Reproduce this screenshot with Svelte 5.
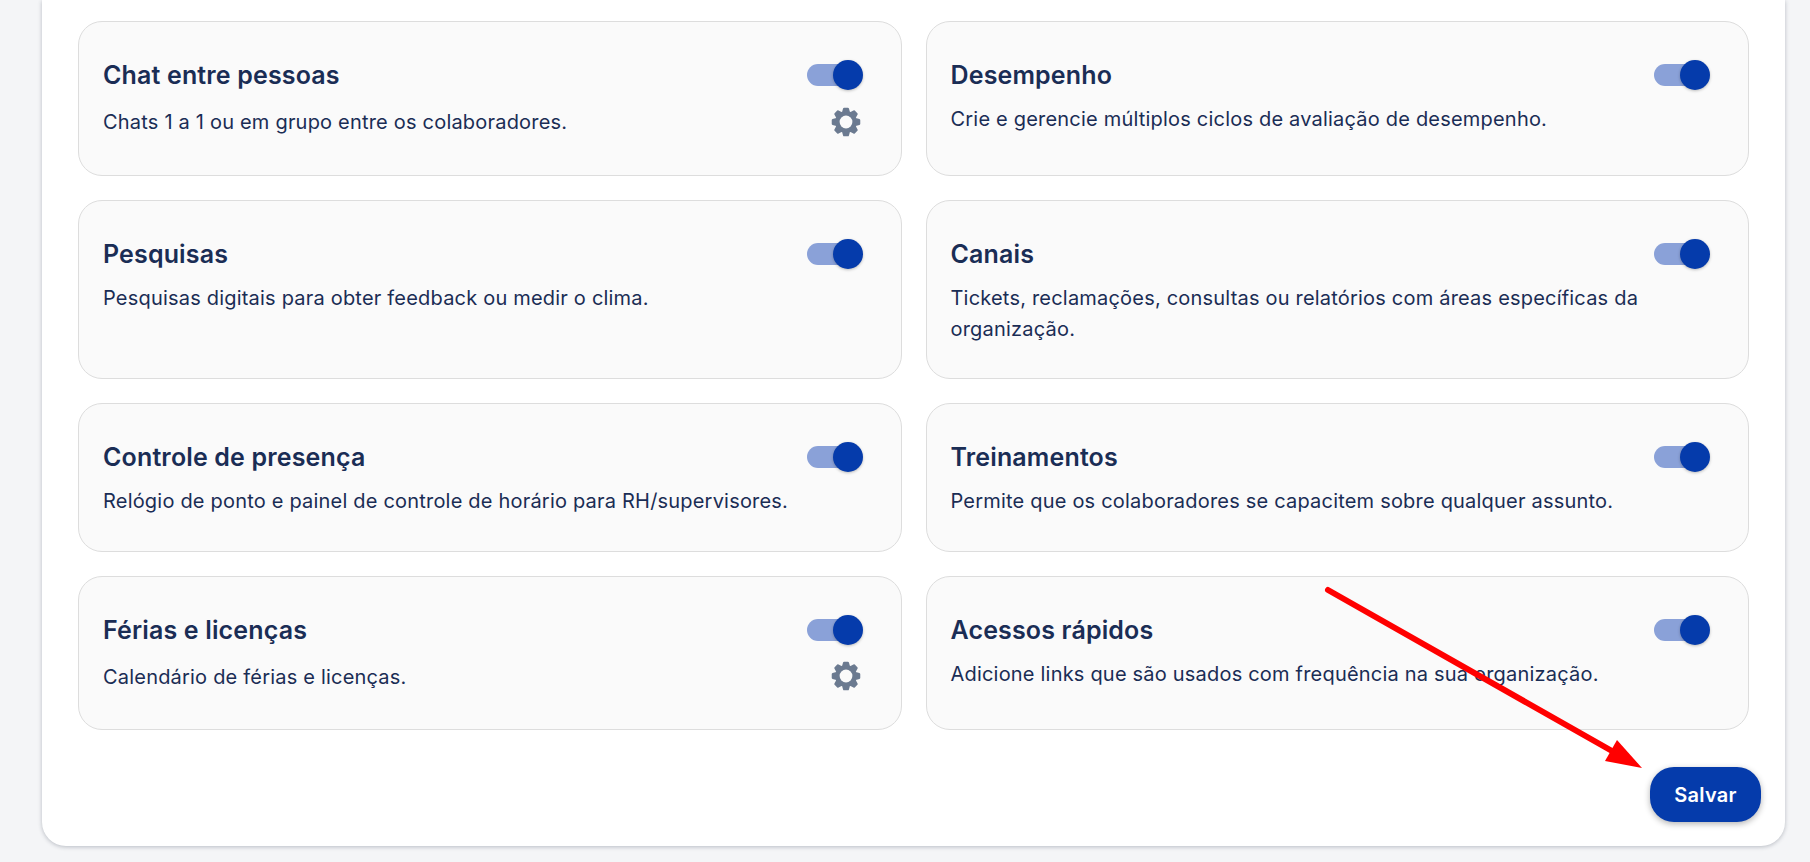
<script>
  const modules = [
    { title: 'Chat entre pessoas', text: 'Chats 1 a 1 ou em grupo entre os colaboradores.', gear: true },
    { title: 'Desempenho', text: 'Crie e gerencie múltiplos ciclos de avaliação de desempenho.' },
    { title: 'Pesquisas', text: 'Pesquisas digitais para obter feedback ou medir o clima.' },
    { title: 'Canais', text: 'Tickets, reclamações, consultas ou relatórios com áreas específicas da organização.' },
    { title: 'Controle de presença', text: 'Relógio de ponto e painel de controle de horário para RH/supervisores.' },
    { title: 'Treinamentos', text: 'Permite que os colaboradores se capacitem sobre qualquer assunto.' },
    { title: 'Férias e licenças', text: 'Calendário de férias e licenças.', gear: true },
    { title: 'Acessos rápidos', text: 'Adicione links que são usados com frequência na sua organização.' }
  ];

  // 8 teeth gear outline
  const teeth = [];
  for (let i = 0; i < 8; i++) {
    const a = (i * Math.PI) / 4 - Math.PI / 2;
    for (const [r, d] of [[8.6, -0.3], [11.6, -0.14], [11.6, 0.14], [8.6, 0.3]]) {
      teeth.push(`${(14 + r * Math.cos(a + d)).toFixed(2)} ${(14 + r * Math.sin(a + d)).toFixed(2)}`);
    }
  }
  const gearPath = 'M' + teeth.join('L') + 'Z';
</script>

<div class="page">
  <div class="panel">
    <div class="grid">
      {#each modules as mod}
        <div class="card">
          <div class="head">
            <span class="title">{mod.title}</span>
            <span class="switch"><span class="knob"></span></span>
          </div>
          <div class="body">
            <span class="text">{mod.text}</span>
            {#if mod.gear}
              <svg class="gear" viewBox="0 0 28 28" aria-hidden="true">
                <path d={gearPath} stroke="#6b7a90" stroke-width="2" stroke-linejoin="round" />
                <circle cx="14" cy="14" r="5.6" fill="#fafafa" />
              </svg>
            {/if}
          </div>
        </div>
      {/each}
    </div>
    <div class="actions">
      <button class="save">Salvar</button>
    </div>
  </div>

  <svg class="arrow" width="1810" height="862" viewBox="0 0 1810 862" aria-hidden="true">
    <line x1="1328" y1="590" x2="1612" y2="751" stroke="#ff0000" stroke-width="6" stroke-linecap="round" />
    <polygon points="1642,768 1605,761 1617,740" fill="#ff0000" />
  </svg>
</div>

<style>
  :global(body) {
    margin: 0;
    background: #f4f5f7;
  }

  .page {
    position: relative;
    height: 862px;
    overflow: hidden;
    padding: 0 25px 16px 42px;
    box-sizing: border-box;
    font-family: Inter, "Liberation Sans", sans-serif;
    color: #1a2d55;
  }

  .panel {
    background: #fff;
    border-radius: 0 0 24px 24px;
    box-shadow: 0 1px 4px rgba(30, 40, 60, 0.28);
    padding: 21px 36px 24px 36px;
    box-sizing: border-box;
  }

  .grid {
    display: grid;
    grid-template-columns: 1fr 1fr;
    gap: 24px;
  }

  .card {
    background: #fafafa;
    border: 1px solid #dddddd;
    border-radius: 24px;
    padding: 31px 24px 33.5px 24px;
    display: flex;
    flex-direction: column;
    gap: 7px;
  }

  .head {
    display: flex;
    align-items: center;
    justify-content: space-between;
    height: 44px;
    padding-right: 15px;
  }

  .title {
    font-size: 25px;
    font-weight: 600;
    letter-spacing: 0.15px;
  }

  .switch {
    position: relative;
    width: 55px;
    height: 22px;
    border-radius: 11px;
    background: #8aa1d8;
  }

  .knob {
    position: absolute;
    right: -1px;
    top: -4px;
    width: 30px;
    height: 30px;
    border-radius: 50%;
    background: #053bab;
    box-shadow: 0 1px 3px rgba(0, 0, 0, 0.25);
  }

  .body {
    display: flex;
    align-items: center;
    justify-content: space-between;
    gap: 40px;
  }

  .text {
    font-size: 20px;
    line-height: 31px;
    letter-spacing: 0.2px;
    max-width: 700px;
  }

  .gear {
    flex: none;
    width: 32px;
    height: 32px;
    margin: 1.5px 15px 3.5px 0;
    fill: #6b7a90;
  }

  .actions {
    display: flex;
    justify-content: flex-end;
    margin-top: 37px;
    margin-right: -12px;
  }

  .save {
    width: 111px;
    height: 55px;
    border: none;
    border-radius: 24px;
    background: #053bab;
    color: #fff;
    font: 600 20px Inter, "Liberation Sans", sans-serif;
    letter-spacing: 0.3px;
    box-shadow: 0 2px 6px rgba(0, 0, 0, 0.3);
  }

  .arrow {
    position: absolute;
    left: 0;
    top: 0;
    pointer-events: none;
  }
</style>
